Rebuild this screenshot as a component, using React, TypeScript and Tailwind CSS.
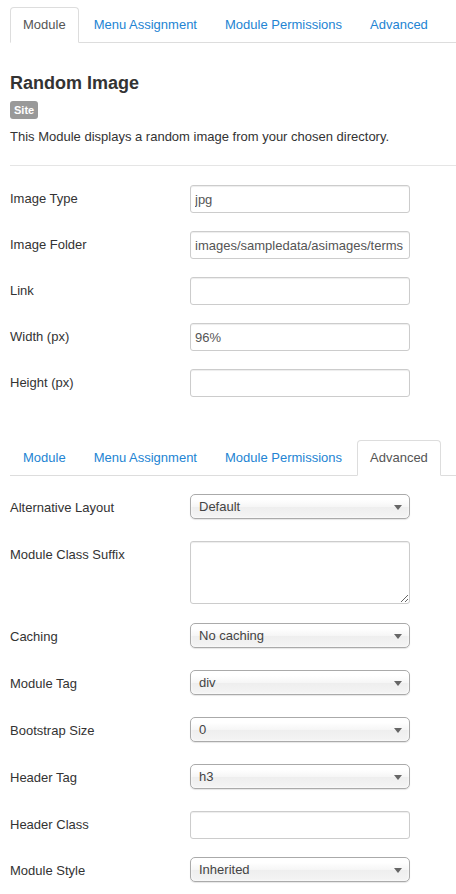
import React from 'react';

const tabs = ['Module', 'Menu Assignment', 'Module Permissions', 'Advanced'];

const Tabs = ({ active }: { active: number }) => (
    <ul className="flex border-b border-[#ddd] ml-[10px]">
        {tabs.map((t, i) => (
            <li key={t} className="-mb-px mr-[2px]">
                <a
                    className={`block px-3 py-2 leading-[18px] border rounded-t-[4px] ${i === active
                        ? 'border-[#ddd] border-b-white bg-white text-[#555]'
                        : 'border-transparent text-[#2384d3]'
                        }`}
                >
                    {t}
                </a>
            </li>
        ))}
    </ul>
);

const TextInput = ({ value = '' }: { value?: string }) => (
    <input
        readOnly
        defaultValue={value}
        className="w-[220px] h-[28px] px-[4px] border border-[#ccc] rounded-[3px] text-[13px] text-[#555] shadow-[inset_0_1px_1px_rgba(0,0,0,0.075)] outline-none bg-white"
    />
);

const Select = ({ value }: { value: string }) => (
    <div className="w-[220px] h-[29px]">
        <div className="relative w-[220px] h-[25px] border border-[#aaa] rounded-[5px] pl-[8px] leading-[23px] text-[13px] text-[#444] bg-[linear-gradient(#fff_20%,#f6f6f6_50%,#eee_52%,#f4f4f4_100%)] shadow-[inset_0_0_3px_#fff,0_1px_1px_rgba(0,0,0,0.1)]">
            {value}
            {/* caret */}
            <span className="absolute right-[7px] top-[10px] w-0 h-0 border-l-[4px] border-r-[4px] border-t-[5px] border-l-transparent border-r-transparent border-t-[#666]" />
        </div>
    </div>
);

const Row = ({ label, children }: { label: string; children: React.ReactNode }) => (
    <div className="flex items-start mb-[18px]">
        <label className="w-[180px] pt-[5px] leading-[18px] text-[#333]">{label}</label>
        {children}
    </div>
);

export default function App() {
    return (
        <div className="w-[456px] min-h-[894px] bg-white text-[13px] text-[#333] font-['Liberation_Sans',Arial,sans-serif] pt-[7px] overflow-hidden">
            <Tabs active={0} />

            <div className="px-[10px]">
                <h2 className="mt-[30px] text-[18px] leading-[20px] font-bold text-[#333]">Random Image</h2>
                <span className="inline-block mt-[8px] px-[4px] py-[2px] leading-[14px] text-[11px] font-bold text-white bg-[#999] rounded-[3px] align-top">
                    Site
                </span>
                <p className="mt-[9px] leading-[18px]">This Module displays a random image from your chosen directory.</p>
            </div>
            <hr className="ml-[10px] mt-[19px] border-0 border-t border-[#e5e5e5]" />

            {/* Module fields */}
            <div className="px-[10px] pt-[19px] pb-[25px]">
                <Row label="Image Type"><TextInput value="jpg" /></Row>
                <Row label="Image Folder"><TextInput value="images/sampledata/asimages/terms" /></Row>
                <Row label="Link"><TextInput /></Row>
                <Row label="Width (px)"><TextInput value="96%" /></Row>
                <Row label="Height (px)"><TextInput /></Row>
            </div>

            <Tabs active={3} />

            {/* Advanced fields */}
            <div className="px-[10px] pt-[18px]">
                <Row label="Alternative Layout"><Select value="Default" /></Row>
                <div className="flex items-start mb-[19px]">
                    <label className="w-[180px] pt-[5px] leading-[18px] text-[#333]">Module Class Suffix</label>
                    <textarea
                        readOnly
                        className="block w-[220px] h-[63px] border border-[#ccc] rounded-[3px] shadow-[inset_0_1px_1px_rgba(0,0,0,0.075)] outline-none"
                    />
                </div>
                <Row label="Caching"><Select value="No caching" /></Row>
                <Row label="Module Tag"><Select value="div" /></Row>
                <Row label="Bootstrap Size"><Select value="0" /></Row>
                <Row label="Header Tag"><Select value="h3" /></Row>
                <Row label="Header Class"><TextInput /></Row>
                <Row label="Module Style"><Select value="Inherited" /></Row>
            </div>
        </div>
    );
}
